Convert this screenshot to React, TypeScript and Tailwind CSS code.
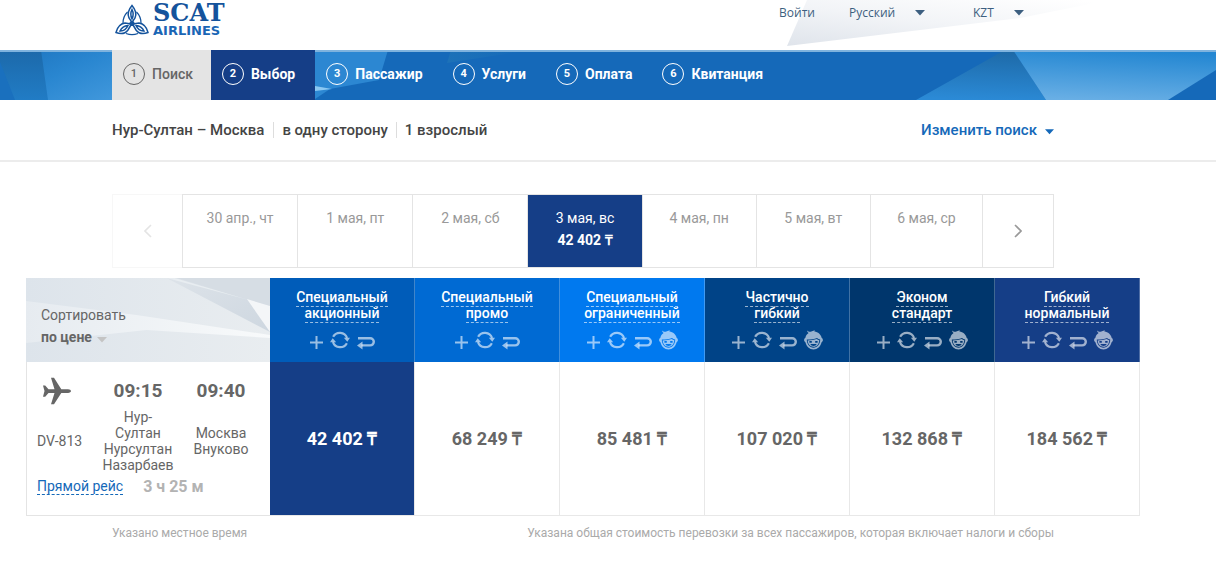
import React from "react";

const steps = ["Поиск", "Выбор", "Пассажир", "Услуги", "Оплата", "Квитанция"];

const days = [
  { label: "30 апр., чт" },
  { label: "1 мая, пт" },
  { label: "2 мая, сб" },
  { label: "3 мая, вс", price: "42 402 ₸" },
  { label: "4 мая, пн" },
  { label: "5 мая, вт" },
  { label: "6 мая, ср" },
];

const fares = [
  { name: ["Специальный", "акционный"], price: "42 402 ₸", bg: "bg-[#005cb9]", child: false },
  { name: ["Специальный", "промо"], price: "68 249 ₸", bg: "bg-[#006ad3]", child: false },
  { name: ["Специальный", "ограниченный"], price: "85 481 ₸", bg: "bg-[#0079ef]", child: true },
  { name: ["Частично", "гибкий"], price: "107 020 ₸", bg: "bg-[#004387]", child: true },
  { name: ["Эконом", "стандарт"], price: "132 868 ₸", bg: "bg-[#00366c]", child: true },
  { name: ["Гибкий", "нормальный"], price: "184 562 ₸", bg: "bg-[#153e87]", child: true },
];

function Triangle({ className }: { className: string }) {
  return (
    <svg className={className} viewBox="0 0 10 6" fill="currentColor" aria-hidden="true">
      <path d="M0 0h10L5 5.6z" />
    </svg>
  );
}

function Logo() {
  return (
    <a href="#" className="flex items-center gap-1 text-[#14539c]">
      <svg className="h-[32px] w-[34px]" viewBox="0 0 34 32" fill="none" stroke="currentColor" strokeWidth="1.5" aria-hidden="true">
        <path d="M17 1.5c-3.600 4.200-4.800 8.500-3 12.500l3 4.500 3-4.500c1.800-4 .6-8.300-3-12.500z" />
        <path d="M17 5.500c-1.500 3-1.700 6 0 9.500 1.700-3.500 1.500-6.500 0-9.500z" />
        <path d="M1 28.500c1.300-5.500 4.300-8.700 9-9.500l6.500 1-3.500 6c-2.800 3.700-6.800 4.500-12 2.500z" />
        <path d="M5 27c1.600-3.400 4-5.200 8-5.500-1.700 3.800-4 5.700-8 5.500z" />
        <path d="M33 28.500c-1.300-5.500-4.300-8.700-9-9.500l-6.500 1 3.500 6c2.800 3.700 6.800 4.500 12 2.500z" />
        <path d="M29 27c-1.600-3.400-4-5.200-8-5.500 1.700 3.800 4 5.700 8 5.500z" />
        <path d="M12.500 8c-3 3-4.500 6.500-4.500 11M21.500 8c3 3 4.500 6.500 4.500 11M11 29.500c3.800 1.500 8.200 1.500 12 0" strokeWidth="1.200" />
        <circle cx="17" cy="19.500" r="2.600" fill="currentColor" stroke="none" />
      </svg>
      <span className="flex flex-col">
        <span className="font-['DejaVu_Serif'] text-[24px] leading-[22px] font-bold">SCAT</span>
        <span className="font-['DejaVu_Sans'] text-[13px] leading-[13px] font-bold text-[#1a66b5]">AIRLINES</span>
      </span>
    </a>
  );
}

function HeaderSelect({ label, value, width }: { label: string; value: string; width: string }) {
  return (
    <span className={`relative flex items-center ${width}`}>
      <select aria-label={label} defaultValue={value} className="w-full cursor-pointer appearance-none bg-transparent text-[12px] leading-4 outline-none">
        <option>{value}</option>
      </select>
      <Triangle className="pointer-events-none absolute right-0 h-[6px] w-[10px]" />
    </span>
  );
}

function Header() {
  return (
    <header className="relative h-[50px] pr-[50px]">
      <svg className="absolute inset-0 h-full w-full" viewBox="0 0 1216 50" preserveAspectRatio="none" aria-hidden="true">
        <defs>
          <linearGradient id="shard" x1="0" y1="1" x2="0.9" y2="0">
            <stop offset="0" stopColor="#dfe4eb" />
            <stop offset="0.5" stopColor="#f2f4f7" />
            <stop offset="1" stopColor="#ffffff" />
          </linearGradient>
        </defs>
        <path d="M807 0L787 46L1020 18L1110 0z" fill="url(#shard)" />
      </svg>
      <div className="relative mx-auto flex max-w-[942px] items-start justify-between pr-[30px] pl-[3px]">
        <div className="pt-[2px]">
          <Logo />
        </div>
        <div className="flex items-center pt-[5px] font-['Open_Sans'] text-[12px] leading-4 text-[#3d5f80]">
          <a href="#" className="mr-[34px]">Войти</a>
          <HeaderSelect label="Язык" value="Русский" width="w-[76px] mr-[48px]" />
          <HeaderSelect label="Валюта" value="KZT" width="w-[51px]" />
        </div>
      </div>
    </header>
  );
}

function Steps() {
  return (
    <nav className="relative bg-[#1569b9] pr-[50px]" aria-label="Этапы">
      <svg className="absolute inset-0 h-full w-full" viewBox="0 0 1216 50" preserveAspectRatio="none" aria-hidden="true">
        <defs>
          <linearGradient id="left" x1="0" y1="0" x2="1" y2="1">
            <stop offset="0" stopColor="#1c72bd" />
            <stop offset="0.5" stopColor="#2986d0" />
            <stop offset="1" stopColor="#4198dc" />
          </linearGradient>
          <linearGradient id="edge" x1="0" y1="0" x2="0" y2="1">
            <stop offset="0" stopColor="#1c69aa" />
            <stop offset="1" stopColor="#217cc5" />
          </linearGradient>
          <linearGradient id="teal" x1="0.6" y1="0" x2="0.5" y2="1">
            <stop offset="0" stopColor="#1d69a7" />
            <stop offset="1" stopColor="#2b8ad6" />
          </linearGradient>
          <linearGradient id="sky" x1="0.5" y1="0" x2="0.3" y2="1">
            <stop offset="0" stopColor="#2487d2" />
            <stop offset="1" stopColor="#69afe5" />
          </linearGradient>
          <linearGradient id="fade" x1="0" y1="0" x2="1" y2="0">
            <stop offset="0" stopColor="#1d72b8" />
            <stop offset="1" stopColor="#1569b9" />
          </linearGradient>
        </defs>
        <path d="M0 0H112V50H0z" fill="url(#left)" />
        <path d="M0 0H41L48 50H0z" fill="url(#edge)" />
        <path d="M0 12L15 50H0z" fill="#1a70be" />
        <path d="M315 0H388L379 30L330 39L315 49z" fill="#2c87d2" />
        <path d="M315 36L332 39L315 41z" fill="#8cc8f2" />
        <path d="M451 0H530L447 13z" fill="url(#fade)" />
        <path d="M1005 0L916 50H1046L1013 0z" fill="url(#teal)" />
        <path d="M1013 0H1216V20L1168 50H1046z" fill="url(#sky)" />
        <path d="M0 0H1216V2H0z" fill="#7fb3de" />
      </svg>
      <ol className="relative mx-auto flex max-w-[942px]">
        {steps.map((step, i) => (
          <li key={step}>
            <a
              href="#"
              aria-current={i === 1 ? "step" : undefined}
              className={`flex h-[50px] items-center gap-[7px] pb-[2px] pl-[11px] text-[14px] ${
                i === 0
                  ? "bg-[#e4e4e4] pr-[18px] font-medium text-[#666]"
                  : i === 1
                    ? "bg-[#153e87] pr-[20px] font-bold text-white"
                    : "pr-[19px] font-bold text-white"
              }`}
            >
              <span className="flex size-[22px] items-center justify-center rounded-full border border-current text-[11px]">{i + 1}</span>
              {step}
            </a>
          </li>
        ))}
      </ol>
    </nav>
  );
}

function Summary() {
  return (
    <section className="border-b-2 border-[#ececec] pr-[50px]">
      <div className="mx-auto flex h-[60px] max-w-[942px] items-center justify-between text-[15px] font-medium text-[#444]">
        <div className="flex items-center leading-4">
          <span className="pr-[9px]">Нур-Султан – Москва</span>
          <span className="border-l border-[#ddd] px-[8px]">в одну сторону</span>
          <span className="border-l border-[#ddd] pl-[8px]">1 взрослый</span>
        </div>
        <button type="button" className="flex cursor-pointer items-center gap-[8px] text-[#1569b9]">
          Изменить поиск
          <Triangle className="mt-[4px] h-[6px] w-[9px]" />
        </button>
      </div>
    </section>
  );
}

function Calendar() {
  return (
    <div className="mx-auto grid h-[74px] max-w-[942px] grid-cols-[70px_repeat(3,115fr)_repeat(3,114fr)_112fr_72px]">
      <button type="button" aria-label="Предыдущие даты" disabled className="flex items-center justify-center border border-r-0 border-[#f7f7f7] text-[#e4e4e4]">
        <svg className="h-[14px] w-[8px]" viewBox="0 0 8 14" fill="none" stroke="currentColor" strokeWidth="1.600">
          <path d="M7 1L1 7l6 6" />
        </svg>
      </button>
      {days.map((day) => (
        <button
          type="button"
          key={day.label}
          className={`flex cursor-pointer flex-col items-center border-y border-l border-[#e4e4e4] pt-[12px] text-[14px] leading-[22px] ${
            day.price ? "bg-[#153e87] text-white" : "text-[#999]"
          }`}
        >
          <span>{day.label}</span>
          {day.price && <span className="font-bold">{day.price}</span>}
        </button>
      ))}
      <button type="button" aria-label="Следующие даты" className="flex cursor-pointer items-center justify-center border border-[#e4e4e4] text-[#999]">
        <svg className="h-[14px] w-[8px]" viewBox="0 0 8 14" fill="none" stroke="currentColor" strokeWidth="1.600">
          <path d="M1 1l6 6-6 6" />
        </svg>
      </button>
    </div>
  );
}

function FareIcons({ child }: { child: boolean }) {
  return (
    <div className="mt-[9px] flex items-center justify-center gap-[7px] text-white/60" aria-hidden="true">
      <svg className="mt-[5px] size-[13px]" viewBox="0 0 13 13" fill="none" stroke="currentColor" strokeWidth="2">
        <path d="M6.500 0v13M0 6.500h13" />
      </svg>
      <svg className="h-[20px] w-[20px]" viewBox="0 0 21 20" fill="none" stroke="currentColor" strokeWidth="2.300">
        <path d="M3.300 6.700A8 8 0 0 1 17.900 7.800M17.700 13.300A8 8 0 0 1 3.100 12.200" />
        <path d="M14.500 7.600H21L18.200 11.800zM6.500 12.400H0L2.800 8.200z" fill="currentColor" stroke="none" />
      </svg>
      <svg className="mt-[5px] h-[14px] w-[18px]" viewBox="0 0 18 14" fill="none" stroke="currentColor" strokeWidth="2.400">
        <path d="M1 2.200h12.200a3.600 3.600 0 0 1 0 7.200H4.500" />
        <path d="M5.500 5.400v8L0 9.400z" fill="currentColor" stroke="none" />
      </svg>
      {child && (
        <svg className="h-[20px] w-[19px]" viewBox="0 0 19 20" fill="currentColor" fillRule="evenodd">
          <path d="M3 .4c1 1 2.200 1.400 3.600 1.300C8 1.200 9.400 .9 10.800 .3l-.4 1.300c3.700.4 6.500 2.800 7.300 6.400.8.300 1.200 1.100 1.200 2.100s-.5 1.900-1.300 2.200c-1.100 4.200-4.200 7.200-8.100 7.200s-7-3-8.100-7.200C.6 12 .1 11.100.1 10.100S.5 8.300 1.300 8c.4-2.100 1.600-3.900 3.300-5C3.700 2.200 3.200 1.400 3 .4zM2.800 9.600c0 4.600 2.700 8.100 6.700 8.100s6.700-3.500 6.700-8.100c-1.200-.2-2.300-.7-3.200-1.500-2.500 1-6.300 1.500-10.200 1.500z" />
          <path d="M3.700 10.600c3.400-.1 6.600-.6 9-1.500.8.600 1.700 1 2.600 1.200-.2 3.800-2.500 6.500-5.800 6.500s-5.600-2.600-5.800-6.200zM5.400 10.900v1.900h2.400v-1.900zM11.200 10.900v1.900h2.400v-1.900zM6.300 13.900c.5 1.300 1.700 2 3.200 2s2.700-.7 3.200-2z" />
        </svg>
      )}
    </div>
  );
}

function SortCell() {
  return (
    <th scope="col" className="relative h-[84px] bg-[#e4e9ee] p-0 text-left align-top font-normal text-[#666]">
      <svg className="absolute inset-0 h-full w-full" viewBox="0 0 243 84" preserveAspectRatio="none" aria-hidden="true">
        <defs>
          <linearGradient id="paper" x1="0" y1="0" x2="1" y2="0">
            <stop offset="0" stopColor="#dde4eb" />
            <stop offset="1" stopColor="#e9edf0" />
          </linearGradient>
          <linearGradient id="fold" x1="0" y1="0" x2="1" y2="1">
            <stop offset="0" stopColor="#dde3e9" />
            <stop offset="1" stopColor="#ced7e0" />
          </linearGradient>
          <linearGradient id="ridge" x1="0" y1="0" x2="1" y2="0">
            <stop offset="0" stopColor="#e6ebf0" />
            <stop offset="1" stopColor="#f8fafb" />
          </linearGradient>
        </defs>
        <path d="M0 0H243V84H0z" fill="url(#paper)" />
        <path d="M0 23L110 37L243 57V60L120 52L0 65z" fill="url(#ridge)" />
        <path d="M140 0H243V54z" fill="url(#fold)" />
        <path d="M150 0H243V28L220 21z" fill="#d6dde4" />
        <path d="M140 0h8L222 22z" fill="#e8edf1" />
        <path d="M220 21L243 28V54z" fill="#f4f6f8" />
      </svg>
      <div className="relative flex flex-col items-start pt-[26px] pl-[15px] text-[14px] leading-[22px]">
        <label htmlFor="sort">Сортировать</label>
        <span className="relative flex w-[66px] items-center">
          <select id="sort" className="w-full cursor-pointer appearance-none bg-transparent font-bold outline-none">
            <option>по цене</option>
          </select>
          <Triangle className="pointer-events-none absolute top-[11px] right-0 h-[6px] w-[10px] text-[#c4c4c4]" />
        </span>
      </div>
    </th>
  );
}

function FlightCell() {
  return (
    <td className="border-b border-l border-[#e4e4e4] p-0 align-top">
      <div className="grid grid-cols-[61px_80px_86px] items-center gap-y-[4px] pt-[15px] pl-[10px] text-center text-[14px] leading-4 text-[#666]">
        <svg className="ml-[6px] size-[28px]" viewBox="0 0 28 28" fill="currentColor" aria-hidden="true">
          <path d="M0 8.500h2.200l3.300 3.700h6L8 .8h3l7.300 11.400h6.700c1.800 0 3 .9 3 1.900s-1.200 1.900-3 1.900h-6.700L11 27.300H8L11.500 16h-6l-3.300 3.700H0l1.500-5.600z" />
        </svg>
        <strong className="text-[19px] leading-[28px] font-bold">09:15</strong>
        <strong className="text-[19px] leading-[28px] font-bold">09:40</strong>
        <span className="text-left">DV-813</span>
        <span>
          Нур-
          <br />
          Султан
          <br />
          Нурсултан
          <br />
          Назарбаев
        </span>
        <span>
          Москва
          <br />
          Внуково
        </span>
      </div>
      <div className="flex items-center gap-[20px] pt-[5px] pl-[10px]">
        <a href="#" className="border-b border-dashed border-[#1569b9] text-[14px] leading-4 text-[#1569b9]">Прямой рейс</a>
        <span className="text-[16px] leading-4 font-bold text-[#b3b3b3]">3 ч 25 м</span>
      </div>
    </td>
  );
}

function FareTable() {
  return (
    <table className="mx-auto mt-[10px] w-full max-w-[1114px] table-fixed border-separate border-spacing-0">
      <colgroup>
        <col className="w-[244px]" />
        {fares.map((f) => (
          <col key={f.price} />
        ))}
      </colgroup>
      <thead>
        <tr>
          <SortCell />
          {fares.map((fare) => (
            <th key={fare.price} scope="col" className={`border-r border-white/25 px-0 pt-[11px] pb-0 align-top text-[14px] leading-4 font-medium text-white ${fare.bg}`}>
              {fare.name.map((word) => (
                <div key={word}>
                  <span className="border-b border-dashed border-white/60 pb-px">{word}</span>
                </div>
              ))}
              <FareIcons child={fare.child} />
            </th>
          ))}
        </tr>
      </thead>
      <tbody>
        <tr>
          <FlightCell />
          {fares.map((fare, i) => (
            <td key={fare.price} className={`h-[154px] border-r border-b border-[#e8e8e8] p-0 text-center text-[18px] font-bold ${i === 0 ? "bg-[#153e87] text-white" : "text-[#666]"}`}>
              <button type="button" className="h-full w-full cursor-pointer">{fare.price}</button>
            </td>
          ))}
        </tr>
      </tbody>
    </table>
  );
}

export default function App() {
  return (
    <div className="min-h-screen bg-white font-[Roboto,sans-serif]">
      <Header />
      <Steps />
      <Summary />
      <main className="pt-[32px] pr-[50px]">
        <Calendar />
        <FareTable />
        <div className="mx-auto flex max-w-[942px] justify-between pt-[9px] text-[12px] leading-4 text-[#aaa]">
          <span>Указано местное время</span>
          <span>Указана общая стоимость перевозки за всех пассажиров, которая включает налоги и сборы</span>
        </div>
      </main>
    </div>
  );
}
